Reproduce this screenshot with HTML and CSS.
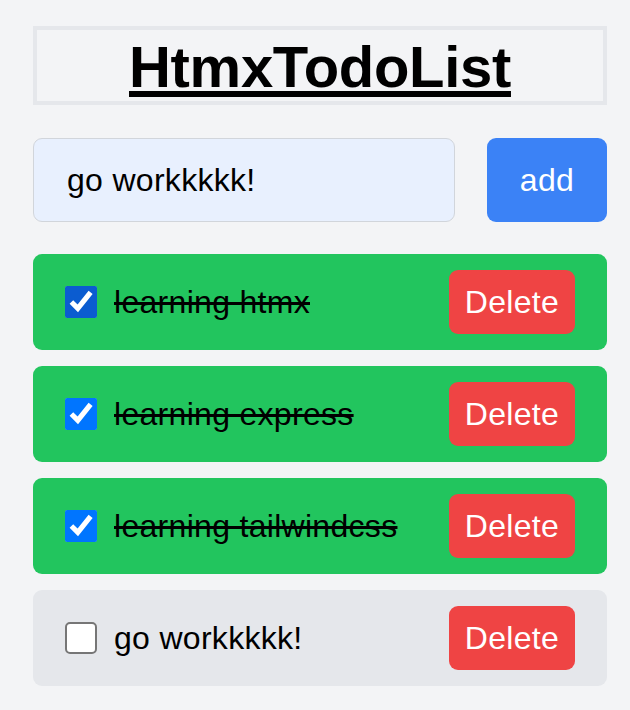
FILE: index.html
```html
<!DOCTYPE html>
<html lang="en">
<head>
<meta charset="utf-8">
<title>HtmxTodoList</title>
<link rel="stylesheet" href="styles.css">
</head>
<body>
<main class="app">
  <header class="header">
    <h1 class="title">HtmxTodoList</h1>
  </header>
  <form class="add-form">
    <input class="add-input" type="text" value="go workkkkk!">
    <button class="add-btn" type="button">add</button>
  </form>
  <ul class="todos">
    <li class="todo done">
      <input class="check check-hover" type="checkbox" checked>
      <span class="todo-text">learning htmx</span>
      <button class="del-btn" type="button">Delete</button>
    </li>
    <li class="todo done">
      <input class="check" type="checkbox" checked>
      <span class="todo-text">learning express</span>
      <button class="del-btn" type="button">Delete</button>
    </li>
    <li class="todo done">
      <input class="check" type="checkbox" checked>
      <span class="todo-text">learning tailwindcss</span>
      <button class="del-btn" type="button">Delete</button>
    </li>
    <li class="todo">
      <input class="check check-empty" type="checkbox">
      <span class="todo-text">go workkkkk!</span>
      <button class="del-btn" type="button">Delete</button>
    </li>
  </ul>
</main>
</body>
</html>
```

FILE: styles.css
```css
* { box-sizing: border-box; }
html, body { margin: 0; padding: 0; }
body {
  background: #f3f4f6;
  font-family: "Liberation Sans", Arial, sans-serif;
  color: #000;
}
.app {
  width: 574px;
  margin-left: 33px;
  padding-top: 26px;
  display: flex;
  flex-direction: column;
}
.header {
  border: 4px solid #e5e7eb;
  height: 79px;
  display: flex;
  justify-content: center;
  align-items: center;
}
.title {
  margin: 0;
  font-size: 58px;
  line-height: 58px;
  font-weight: 700;
  letter-spacing: -0.3px;
  text-decoration: underline;
  text-decoration-thickness: 6px;
  text-underline-offset: 4px;
  padding-top: 3px;
}
.add-form {
  margin-top: 33px;
  display: flex;
  gap: 32px;
  height: 84px;
}
.add-input {
  flex: 1 1 0;
  min-width: 0;
  width: 0;
  margin: 0;
  border: 1px solid #d1d5db;
  border-radius: 9px;
  background: #e8f0fe;
  padding: 0 33px;
  font-family: inherit;
  font-size: 32px;
  letter-spacing: 0.3px;
  color: #000;
  outline: none;
}
.add-btn {
  flex: none;
  width: 120px;
  border: 0;
  border-radius: 9px;
  background: #3b82f6;
  color: #fff;
  font-family: inherit;
  font-size: 32px;
  letter-spacing: 0.3px;
  padding: 0;
}
.todos {
  list-style: none;
  margin: 32px 0 0;
  padding: 0;
  display: flex;
  flex-direction: column;
  gap: 16px;
}
.todo {
  height: 96px;
  border-radius: 9px;
  background: #e5e7eb;
  display: flex;
  align-items: center;
  padding: 0 32px;
}
.todo.done { background: #22c55e; }
.check {
  width: 32px;
  height: 32px;
  margin: 0;
  flex: none;
}
.check-hover { accent-color: #0b5cd0; }
.check-empty {
  appearance: none;
  -webkit-appearance: none;
  background: #fff;
  border: 2px solid #767676;
  border-radius: 5px;
}
.todo-text {
  margin-left: 17px;
  font-size: 32px;
  letter-spacing: 0.3px;
  flex: 1;
}
.done .todo-text { text-decoration: line-through; }
.del-btn {
  flex: none;
  width: 126px;
  height: 64px;
  border: 0;
  border-radius: 9px;
  background: #ef4444;
  color: #fff;
  font-family: inherit;
  font-size: 32px;
  letter-spacing: 0.3px;
  padding: 0;
}
```
